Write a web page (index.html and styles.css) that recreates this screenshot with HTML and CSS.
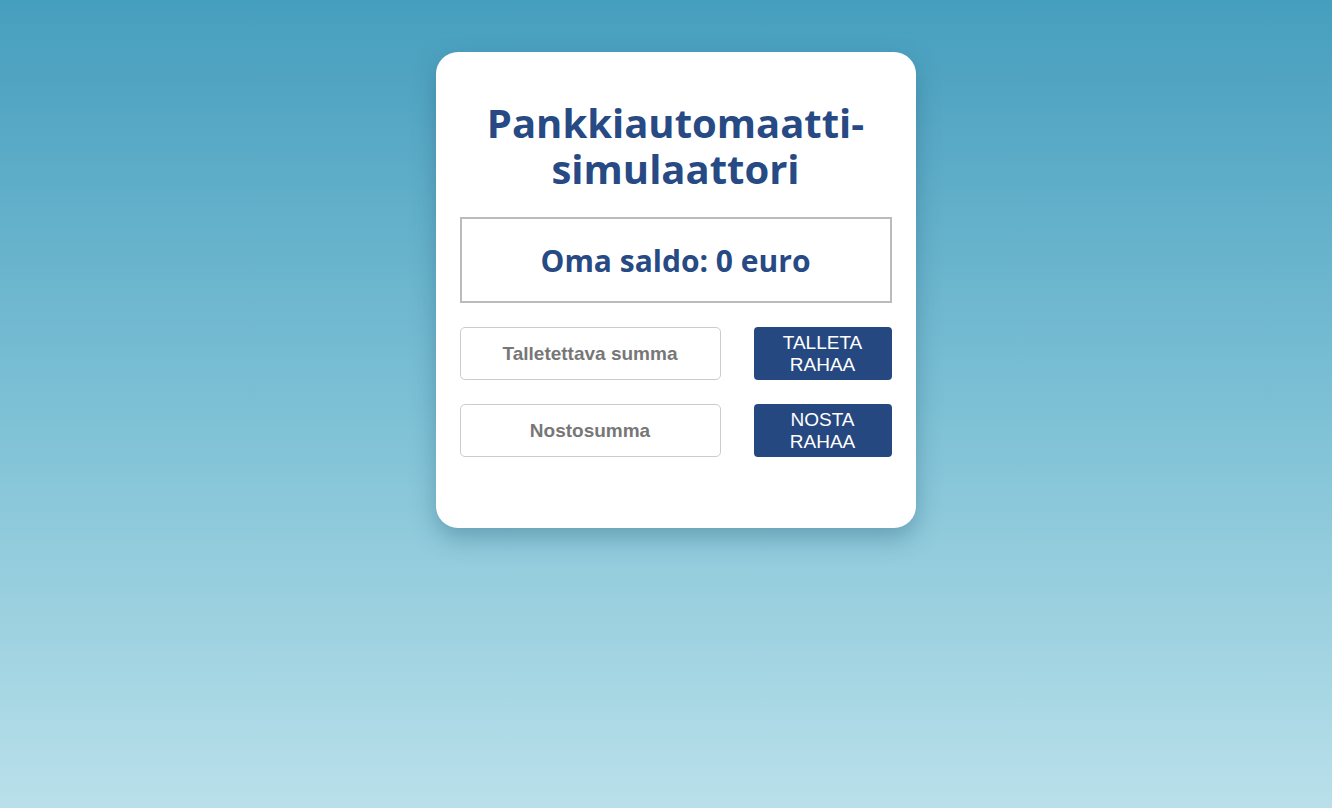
FILE: index.html
```
<!DOCTYPE html>
<html lang="fi">
<head>
<meta charset="utf-8">
<title>Pankkiautomaatti-simulaattori</title>
<link rel="stylesheet" href="styles.css">
</head>
<body>
<main class="card">
  <h1 class="title">Pankkiautomaatti-<br>simulaattori</h1>
  <div class="balance">Oma saldo: 0 euro</div>
  <div class="row">
    <input class="field" type="text" placeholder="Talletettava summa">
    <button class="btn">TALLETA RAHAA</button>
  </div>
  <div class="row">
    <input class="field" type="text" placeholder="Nostosumma">
    <button class="btn">NOSTA RAHAA</button>
  </div>
</main>
</body>
</html>
```
FILE: styles.css
```
html, body {
  margin: 0;
  height: 100%;
}
body {
  background: linear-gradient(to bottom, #469ebe 0%, #7cc0d5 50%, #b9e0ea 100%);
  display: flex;
  justify-content: center;
  align-items: flex-start;
  padding-left: 19px;
  box-sizing: border-box;
  font-family: "Liberation Sans", Arial, sans-serif;
}
.card {
  margin-top: 52px;
  width: 480px;
  height: 476px;
  box-sizing: border-box;
  background: #fff;
  border-radius: 22px;
  box-shadow: 0 10px 25px rgba(30, 80, 110, 0.35);
  padding: 48px 24px 0;
}
.title {
  margin: 0 0 25px;
  text-align: center;
  color: #274a84;
  font-family: "Open Sans", sans-serif;
  font-weight: 700;
  font-size: 40px;
  line-height: 46px;
}
.balance {
  height: 86px;
  box-sizing: border-box;
  border: 2px solid #bbb;
  display: flex;
  align-items: center;
  justify-content: center;
  color: #274a84;
  font-family: "Open Sans", sans-serif;
  font-weight: 700;
  font-size: 30px;
  margin-bottom: 24px;
}
.row {
  display: flex;
  justify-content: space-between;
  margin-bottom: 24px;
}
.field {
  width: 261px;
  height: 53px;
  box-sizing: border-box;
  border: 1px solid #ccc;
  border-radius: 5px;
  text-align: center;
  font-family: "Liberation Sans", Arial, sans-serif;
  font-size: 19px;
  font-weight: 700;
  color: #333;
  outline: none;
}
.field::placeholder {
  color: #777;
  opacity: 1;
}
.btn {
  width: 138px;
  height: 53px;
  box-sizing: border-box;
  border: none;
  border-radius: 4px;
  background: #264880;
  color: #fff;
  font-family: "Liberation Sans", Arial, sans-serif;
  font-size: 19px;
  line-height: 22px;
  padding: 0 12px;
}
```
